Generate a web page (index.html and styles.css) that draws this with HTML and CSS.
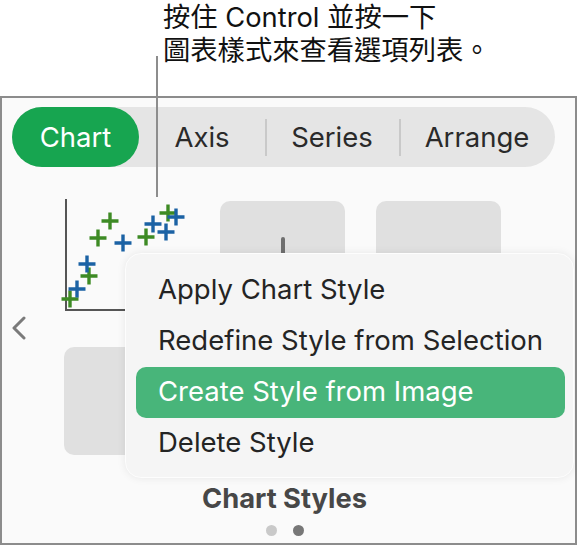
FILE: index.html
```html
<!DOCTYPE html>
<html lang="zh-Hant">
<head>
<meta charset="utf-8">
<link rel="stylesheet" href="styles.css">
</head>
<body>
<div class="caption">
  <div class="cap-line">按住 Control 並按一下</div>
  <div class="cap-line">圖表樣式來查看選項列表。</div>
</div>
<div class="callout-line"></div>
<div class="panel">
  <div class="tabs">
    <div class="tab active">Chart</div>
    <div class="tab">Axis</div>
    <div class="tab sep">Series</div>
    <div class="tab sep">Arrange</div>
  </div>
  <div class="browser">
    <svg class="chev" width="14" height="24" viewBox="0 0 14 24"><polyline points="12,2 2,12 12,22" fill="none" stroke="#7a7a7a" stroke-width="3" stroke-linecap="round" stroke-linejoin="round"/></svg>
    <div class="grid">
      <div class="thumb chart">
        <svg width="125" height="108" viewBox="0 0 125 108" overflow="visible">
          <path d="M2,-2 V109 H122" fill="none" stroke="#555" stroke-width="2"/>
          <g stroke="#3d8a24" stroke-width="3.4" fill="none">
            <path d="M37.5,20h17M46,11.5v17"/>
            <path d="M25.5,37h17M34,28.5v17"/>
            <path d="M73.5,36h17M82,27.5v17"/>
            <path d="M95.5,12h17M104,3.5v17"/>
            <path d="M16.5,75h17M25,66.5v17"/>
            <path d="M-2.5,98h17M6,89.5v17"/>
          </g>
          <g stroke="#1b62a4" stroke-width="3.4" fill="none">
            <path d="M50.5,42h17M59,33.5v17"/>
            <path d="M80.5,23h17M89,14.5v17"/>
            <path d="M93.5,31h17M102,22.5v17"/>
            <path d="M103.5,16h17M112,7.5v17"/>
            <path d="M14.5,63h17M23,54.5v17"/>
            <path d="M4.5,88h17M13,79.5v17"/>
          </g>
        </svg>
      </div>
      <div class="thumb gray"><div class="bar"></div></div>
      <div class="thumb gray"></div>
      <div class="thumb gray"></div>
      <div class="thumb gray"></div>
      <div class="thumb gray"></div>
    </div>
  </div>
  <div class="footer">
    <div class="title">Chart Styles</div>
    <div class="dots"><span class="dot"></span><span class="dot on"></span></div>
  </div>
  <div class="menu">
    <div class="item">Apply Chart Style</div>
    <div class="item">Redefine Style from Selection</div>
    <div class="item hl">Create Style from Image</div>
    <div class="item">Delete Style</div>
  </div>
</div>
</body>
</html>
```
FILE: styles.css
```css
html, body {
  margin: 0;
  padding: 0;
  background: #ffffff;
}
body {
  width: 577px;
  height: 545px;
  overflow: hidden;
  position: relative;
  font-family: Inter, "Noto Sans CJK TC", sans-serif;
  color: #222;
}
.caption {
  height: 96px;
  box-sizing: border-box;
  padding: 1px 0 0 163px;
  font-size: 27.3px;
  color: #111;
}
.cap-line {
  height: 33px;
  line-height: 33px;
  white-space: nowrap;
}
.callout-line {
  position: absolute;
  left: 156px;
  top: 56px;
  width: 2px;
  height: 141px;
  background: #8d8d8d;
  z-index: 5;
}
.panel {
  position: relative;
  height: 449px;
  box-sizing: border-box;
  border: 2px solid #8c8c8c;
  background: #fafafa;
}
.tabs {
  margin: 9px 0 0 10px;
  width: 543px;
  height: 60px;
  border-radius: 30px;
  background: #e5e5e5;
  display: grid;
  grid-template-columns: 127px 126px 134px 156px;
}
.tab {
  display: flex;
  align-items: center;
  justify-content: center;
  font-size: 27.5px;
  color: #2a2a2a;
}
.tab.active {
  background: #17a550;
  color: #fff;
  border-radius: 30px;
}
.tab.sep {
  background: linear-gradient(#c9c9c9, #c9c9c9) left center / 2px 37px no-repeat;
}
.browser {
  display: flex;
  align-items: center;
  margin-top: 34px;
  padding-left: 10px;
}
.chev {
  margin-right: 38px;
  flex: none;
}
.grid {
  display: grid;
  grid-template-columns: repeat(3, 125px);
  grid-auto-rows: 108px;
  column-gap: 31px;
  row-gap: 38px;
}
.thumb {
  border-radius: 10px;
}
.thumb.gray {
  background: #e0e0e0;
}
.thumb svg {
  display: block;
  overflow: visible;
}
.bar {
  width: 4px;
  height: 40px;
  border-radius: 2px;
  background: #6f6f6f;
  margin: 36px auto 0;
}
.footer {
  margin-top: 28px;
  padding-right: 8px;
  display: flex;
  flex-direction: column;
  align-items: center;
}
.title {
  font-size: 27.3px;
  line-height: 32px;
  font-weight: 700;
  color: #474747;
}
.dots {
  margin-top: 10px;
  display: flex;
  gap: 16px;
}
.dot {
  width: 11px;
  height: 11px;
  border-radius: 50%;
  background: #c9c9c9;
}
.dot.on {
  background: #777;
}
.menu {
  position: absolute;
  left: 123px;
  top: 155px;
  width: 449px;
  height: 225px;
  box-sizing: border-box;
  padding: 11px 8px 10px 10px;
  border-radius: 16px;
  background: #f5f5f5;
  border: 1px solid #fdfdfd;
  box-shadow: 0 0 8px rgba(0, 0, 0, 0.08);
  z-index: 3;
}
.item {
  height: 51px;
  box-sizing: border-box;
  padding: 0 0 3px 22px;
  display: flex;
  align-items: center;
  border-radius: 10px;
  font-size: 27.5px;
  color: #242424;
  white-space: nowrap;
}
.item.hl {
  background: #48b57a;
  color: #fff;
}
```
